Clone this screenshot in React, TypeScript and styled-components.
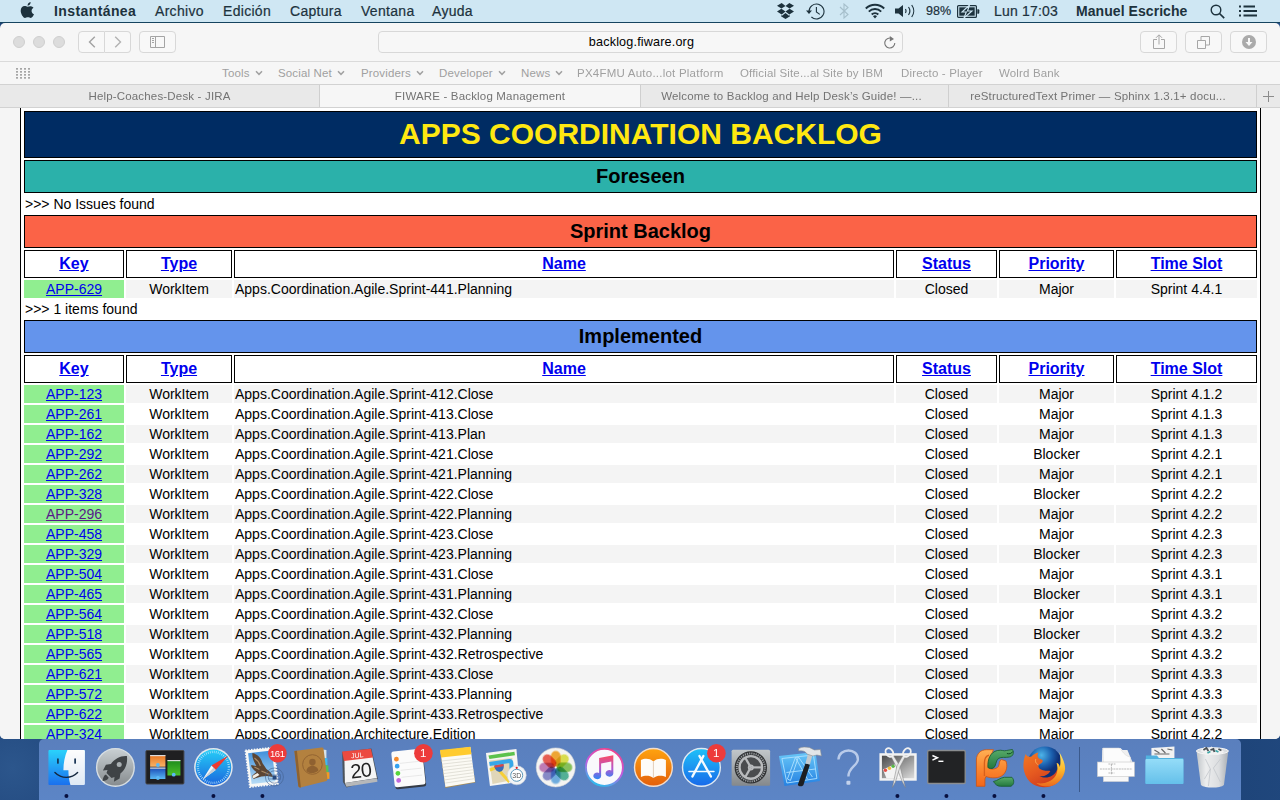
import React from 'react';
import styled, { createGlobalStyle, css } from 'styled-components';

const Global = createGlobalStyle`
  * { box-sizing: border-box; }
  body { margin: 0; overflow: hidden; font-family: 'Liberation Sans', Arial, Helvetica, sans-serif; }
  svg { display: block; flex: none; }
`;

const Desktop = styled.div`
  width: 1280px;
  height: 800px;
  display: flex;
  flex-direction: column;
  overflow: hidden;
  background: radial-gradient(circle at 1% 96%, #2c568c 0, #234a80 4%, #1d4175 20%, #1d4377 80%, #26508a 100%);
`;

/* ---------- menu bar ---------- */

const MenuBar = styled.header`
  height: 23px;
  flex: none;
  display: flex;
  justify-content: space-between;
  background: #cfe7f3;
  border-bottom: 1px solid #16445f;
  color: #1d323d;
`;

const MenuGroup = styled.div`
  display: flex;
  align-items: center;
  height: 22px;
`;

const MenuItem = styled.span<{ $w: number; $bold?: boolean; $ls?: number; $size?: number }>`
  width: ${p => p.$w}px;
  flex: none;
  white-space: nowrap;
  font-size: ${p => p.$size ?? 14}px;
  line-height: 22px;
  letter-spacing: ${p => p.$ls ?? 0.3}px;
  font-weight: ${p => (p.$bold ? 700 : 400)};
  -webkit-text-stroke: ${p => (p.$bold ? 0 : 0.2)}px currentColor;
`;

const IconSlot = styled.span<{ $w: number }>`
  width: ${p => p.$w}px;
  flex: none;
`;

/* ---------- browser window ---------- */

const Window = styled.main`
  height: 716px;
  flex: none;
  display: flex;
  flex-direction: column;
  overflow: hidden;
  border-radius: 5px;
  background: #f6f6f6;
`;

const Toolbar = styled.div`
  height: 39px;
  flex: none;
  display: flex;
  align-items: center;
  padding: 0 13px;
  border-bottom: 1px solid #dadada;
`;

const Lights = styled.div`
  display: flex;
  gap: 8px;
  width: 65px;
`;

const Light = styled.i`
  width: 12px;
  height: 12px;
  border-radius: 50%;
  background: #dcdcdc;
  border: 1px solid #cfcfcf;
`;

const ToolButton = styled.button<{ $w?: number; $side?: 'left' | 'right' }>`
  width: ${p => p.$w ?? 37}px;
  height: 22px;
  padding: 0;
  display: flex;
  align-items: center;
  justify-content: center;
  background: #f8f8f8;
  border: 1px solid #d8d8d8;
  border-radius: 4px;
  ${p => p.$side === 'left' && css`border-radius: 4px 0 0 4px;`}
  ${p => p.$side === 'right' && css`border-radius: 0 4px 4px 0; border-left: 0;`}
`;

const ButtonPair = styled.div`
  display: flex;
  width: 61px;
`;

const AddressBar = styled.div`
  width: 525px;
  height: 22px;
  margin-left: 202px;
  padding: 0 6px 0 20px;
  display: flex;
  align-items: center;
  border: 1px solid #d8d8d8;
  border-radius: 4px;
  background: #f7f7f7;
  font-size: 12.6px;
  letter-spacing: 0.17px;
  color: #000;
`;

const Address = styled.span`
  flex: 1;
  text-align: center;
`;

const ToolActions = styled.div`
  display: flex;
  gap: 8px;
  margin-left: auto;
`;

const Bookmarks = styled.nav`
  height: 23px;
  flex: none;
  display: flex;
  align-items: center;
  padding-left: 16px;
  border-bottom: 1px solid #d2d2d2;
`;

const Bookmark = styled.span<{ $w: number; $ls?: number }>`
  width: ${p => p.$w}px;
  flex: none;
  display: flex;
  align-items: center;
  gap: 5px;
  white-space: nowrap;
  font-size: 11.5px;
  letter-spacing: ${p => p.$ls ?? 0.15}px;
  color: #a0a0a0;
`;

const Tabs = styled.div`
  height: 23px;
  flex: none;
  display: grid;
  grid-template-columns: 320px 321px 308px 308px 23px;
  border-bottom: 1px solid #d2d2d2;
`;

const Tab = styled.div<{ $active?: boolean; $shift?: number }>`
  display: flex;
  align-items: center;
  justify-content: center;
  padding-right: ${p => p.$shift ?? 0}px;
  border-right: 1px solid #cfcfcf;
  background: ${p => (p.$active ? '#f6f6f6' : '#e9e9e9')};
  color: #737373;
  font-size: 11.5px;
  letter-spacing: 0.17px;
  white-space: nowrap;
  &:last-child { border-right: 0; }
`;

/* ---------- backlog page ---------- */

const Page = styled.div`
  flex: 1;
  min-height: 0;
  overflow: hidden;
  padding: 0 19px 0 20px;
  background: #f5f5f5;
`;

const Sheet = styled.div`
  display: flex;
  flex-direction: column;
  gap: 2px;
  min-height: 100%;
  padding: 3px 3px 0;
  background: #fff;
  border: solid #000;
  border-width: 0 1px;
`;

const Banner = styled.h1`
  margin: 0;
  height: 47px;
  border: 1px solid #000;
  background: #002c63;
  color: #ffe811;
  font-size: 30px;
  line-height: 44px;
  text-align: center;
`;

const SectionTitle = styled.h2<{ $bg: string }>`
  margin: 0;
  height: 33px;
  border: 1px solid #000;
  background: ${p => p.$bg};
  font-size: 20px;
  line-height: 31px;
  text-align: center;
`;

const Note = styled.p`
  margin: 0;
  padding-left: 1px;
  height: 18px;
  line-height: 18px;
  font-size: 14px;
`;

const columns = css`
  display: grid;
  grid-template-columns: 100px 106px 660px 101px 115px 141px;
  column-gap: 2px;
`;

const HeadRow = styled.div`
  ${columns}
  height: 28px;
`;

const HeadCell = styled.a`
  border: 1px solid #000;
  color: #00e;
  font-size: 16px;
  font-weight: 700;
  line-height: 26px;
  text-align: center;
  text-decoration: underline;
`;

const Row = styled.div<{ $shade: boolean }>`
  ${columns}
  height: 18px;
  font-size: 14px;
  line-height: 18px;
  & > span { background: ${p => (p.$shade ? '#f4f4f4' : '#fff')}; }
`;

const Cell = styled.span<{ $left?: boolean }>`
  padding-left: ${p => (p.$left ? 1 : 0)}px;
  text-align: ${p => (p.$left ? 'left' : 'center')};
`;

const KeyCell = styled.a<{ $visited?: boolean }>`
  background: #90ee90;
  color: ${p => (p.$visited ? '#551a8b' : '#00e')};
  text-align: center;
  text-decoration: underline;
`;

/* ---------- dock ---------- */

const DockArea = styled.footer`
  height: 61px;
  flex: none;
  display: flex;
  padding-left: 39px;
`;

const Dock = styled.div`
  width: 1202px;
  height: 61px;
  display: flex;
  padding-left: 3.4px;
  border-radius: 5px 5px 0 0;
  background: linear-gradient(#5a7fbd, #5c85c6);
`;

const DockSlot = styled.svg`
  width: 48.85px;
  height: 61px;
`;

const Separator = styled.i`
  width: 1px;
  height: 45px;
  margin: 8px 10.6px 0 11px;
  background: #3b5a8c;
`;

const titles = ['Key', 'Type', 'Name', 'Status', 'Priority', 'Time Slot'];

type Issue = [key: string, name: string, priority: string, slot: string];

const implemented: Issue[] = [
  ['APP-123', 'Agile.Sprint-412.Close', 'Major', '4.1.2'],
  ['APP-261', 'Agile.Sprint-413.Close', 'Major', '4.1.3'],
  ['APP-162', 'Agile.Sprint-413.Plan', 'Major', '4.1.3'],
  ['APP-292', 'Agile.Sprint-421.Close', 'Blocker', '4.2.1'],
  ['APP-262', 'Agile.Sprint-421.Planning', 'Major', '4.2.1'],
  ['APP-328', 'Agile.Sprint-422.Close', 'Blocker', '4.2.2'],
  ['APP-296', 'Agile.Sprint-422.Planning', 'Major', '4.2.2'],
  ['APP-458', 'Agile.Sprint-423.Close', 'Major', '4.2.3'],
  ['APP-329', 'Agile.Sprint-423.Planning', 'Blocker', '4.2.3'],
  ['APP-504', 'Agile.Sprint-431.Close', 'Major', '4.3.1'],
  ['APP-465', 'Agile.Sprint-431.Planning', 'Blocker', '4.3.1'],
  ['APP-564', 'Agile.Sprint-432.Close', 'Major', '4.3.2'],
  ['APP-518', 'Agile.Sprint-432.Planning', 'Blocker', '4.3.2'],
  ['APP-565', 'Agile.Sprint-432.Retrospective', 'Major', '4.3.2'],
  ['APP-621', 'Agile.Sprint-433.Close', 'Major', '4.3.3'],
  ['APP-572', 'Agile.Sprint-433.Planning', 'Major', '4.3.3'],
  ['APP-622', 'Agile.Sprint-433.Retrospective', 'Major', '4.3.3'],
  ['APP-324', 'Architecture.Edition', 'Major', '4.2.2'],
];

const sprint: Issue[] = [['APP-629', 'Agile.Sprint-441.Planning', 'Major', '4.4.1']];

function IssueTable({ issues }: { issues: Issue[] }) {
  return (
    <>
      <HeadRow>{titles.map(t => <HeadCell key={t}>{t}</HeadCell>)}</HeadRow>
      {issues.map(([key, name, priority, slot], i) => (
        <Row key={key} $shade={i % 2 === 0}>
          <KeyCell $visited={key === 'APP-296'}>{key}</KeyCell>
          <Cell>WorkItem</Cell>
          <Cell $left>Apps.Coordination.{name}</Cell>
          <Cell>Closed</Cell>
          <Cell>{priority}</Cell>
          <Cell>Sprint {slot}</Cell>
        </Row>
      ))}
    </>
  );
}

const Chevron = () => (
  <svg width="8" height="6" viewBox="0 0 8 6"><path d="M1 1.2 4 4.3 7 1.2" fill="none" stroke="#a2a2a2" strokeWidth="1.5" /></svg>
);

/* Dock icons share a coordinate system whose origin is the centre of the icon. */
function DockIcon({ children, running }: { children: React.ReactNode; running?: boolean }) {
  return (
    <DockSlot viewBox="-24.42 -29 48.85 61">
      {children}
      {running && <circle cx="0" cy="28" r="2" fill="#08103f" />}
    </DockSlot>
  );
}

const Badge = ({ text, x = 15 }: { text: string; x?: number }) => (
  <g>
    <circle cx={x} cy="-14.8" r="9.3" fill="#ed3b3b" />
    <text x={x - 0.2} y="-10.8" fontSize={text.length > 1 ? 9.5 : 11.5} textAnchor="middle" fill="#fff" letterSpacing={text.length > 1 ? -0.4 : 0}>{text}</text>
  </g>
);

const petals = ['#f8a21c', '#dfe33a', '#7cc24a', '#3fae8f', '#5fa9e6', '#7c7fcb', '#c06fb5', '#ee4b3c'];

function DockIcons() {
  return (
    <>
      <DockIcon running>
        <defs>
          <linearGradient id="fl" x2="0" y2="1"><stop offset="0" stopColor="#2ad2fb" /><stop offset="1" stopColor="#1a70ee" /></linearGradient>
          <linearGradient id="fr" x2="0" y2="1"><stop offset="0" stopColor="#fdfdfd" /><stop offset="1" stopColor="#dfe9f4" /></linearGradient>
        </defs>
        <rect x="-18" y="-18" width="36.5" height="35" rx="1" fill="url(#fl)" />
        <path d="M1-18H17.5a1 1 0 0 1 1 1V16a1 1 0 0 1-1 1H4C2.600 12 2 7 2 2.200H-3C-3-5-1.700-12 1-18Z" fill="url(#fr)" />
        <path d="M-8.500-8.800v3.700M8.700-8.800v3.700" stroke="#153253" strokeWidth="1.700" strokeLinecap="round" />
        <path d="M-11.500 4.500C-5 11 5 11 11.200 4.500" fill="none" stroke="#14273e" strokeWidth="1.400" strokeLinecap="round" />
      </DockIcon>
      <DockIcon>
        <linearGradient id="lp" x2="0" y2="1"><stop offset="0" stopColor="#c9d0d3" /><stop offset="1" stopColor="#868b8e" /></linearGradient>
        <circle r="18.800" cy="-.6" fill="url(#lp)" stroke="#d7dee2" strokeWidth="1.400" />
        <path d="M11.500-12C5-12.500-1-9-4.500-4l-5 .8-3 5.700 4.600-.4-1 3 5 5 3-1-.6 4.600L4.200 10.500 5 5.500C10 2 12.500-5 11.500-12ZM-9.500 6.500C-12 7.500-12.500 10.500-12.800 13c2.500-.3 5-.8 6.100-3.300Z" fill="#3f4346" />
        <circle cx="3.800" cy="-3.500" r="2.500" fill="#aab0b3" />
      </DockIcon>
      <DockIcon>
        <defs>
          <linearGradient id="mo" x2="0" y2="1"><stop offset="0" stopColor="#e8741e" /><stop offset="1" stopColor="#f8b368" /></linearGradient>
          <linearGradient id="mb" x2="0" y2="1"><stop offset="0" stopColor="#1848b4" /><stop offset="1" stopColor="#59b8f4" /></linearGradient>
          <linearGradient id="mg" x2="0" y2="1"><stop offset="0" stopColor="#1c8a1c" /><stop offset="1" stopColor="#4cc02a" /></linearGradient>
        </defs>
        <rect x="-18.500" y="-17.500" width="38" height="33.500" rx="1" fill="#1f1f21" stroke="#454547" />
        <rect x="-14.300" y="-13" width="15.300" height="11.700" fill="url(#mo)" /><rect x="-14.300" y="-13" width="15.300" height="1.200" fill="#ddd" />
        <rect x="-14.300" y="-.5" width="15.300" height="11.500" fill="url(#mb)" /><rect x="-14.300" y="-.5" width="15.300" height="1.200" fill="#ddd" />
        <rect x="3" y="-8" width="13" height="15.500" fill="url(#mg)" /><rect x="3" y="-8" width="13" height="1.200" fill="#ddd" />
        <g fill="#5bb9f6"><circle cx="-6.500" cy="-3" r="1.900" /><circle cx="-6.500" cy="10" r="1.900" /><circle cx="9.300" cy="6.700" r="1.900" /></g>
      </DockIcon>
      <DockIcon running>
        <linearGradient id="sa" x2="0" y2="1"><stop offset="0" stopColor="#25cdf7" /><stop offset="1" stopColor="#1a66dd" /></linearGradient>
        <circle r="19.300" cy="-.6" fill="#e3e8ec" /><circle r="17.800" cy="-.6" fill="url(#sa)" />
        <circle r="15.500" cy="-.6" fill="none" stroke="#b5e4fb" strokeWidth="2.400" strokeDasharray=".7 1.329" />
        <path d="M15-12.500 2.300 2-2-2.500Z" fill="#ef3a30" /><path d="M-10.700 11.500-2-2.500 2.300 2Z" fill="#f4f6f8" /><path d="M-10.700 11.500 2.300 2 0-.2Z" fill="#c9ced4" />
      </DockIcon>
      <DockIcon running>
        <linearGradient id="ma" x2="0" y2="1"><stop offset="0" stopColor="#3f8fdb" /><stop offset="1" stopColor="#b8dcf5" /></linearGradient>
        <path d="M-17-17.500 11.500-20.500 15.500 16-12.500 19Z" fill="#f8f8f6" stroke="#f8f8f6" strokeWidth="1.800" strokeDasharray="1.500 1.300" />
        <path d="M-14.300-14.800 9.500-17.500 13 13.300-10.800 16Z" fill="url(#ma)" />
        <path d="M-10-15C-5-14-1-10 0-5L4 1C8 4 10 6 10.500 9L5 8-1 8.500-9 11-10.500 8-6 4C-10 1-12-2-11-3L-6-2C-9-7-10.500-11-10-15Z" fill="#5c4533" />
        <path d="M-8-10C-5-8-3-5-2-2M-1 3 7 6.500M-8-1 -3 1.500" stroke="#a98a66" strokeWidth="1.200" fill="none" />
        <path d="m-10 8 5-3 2 2-6 3.500Z" fill="#f3eee4" />
        <g fill="none" stroke="#41608e" strokeWidth=".8" opacity=".75"><circle cx="12" cy="9" r="9" /><circle cx="12" cy="9" r="6.200" /><path d="M6 7h12M6 11h12" /></g><rect x="10.200" y="7.500" width="4" height="4" fill="#27497e" />
        <Badge text="161" />
      </DockIcon>
      <DockIcon>
        <path d="m11-18.500 4 .5v8.500l-4 0Z" fill="#d8e3e8" /><path d="m12-10 4 .3v7L12-3Z" fill="#41b8ef" /><path d="m12-3 5 .5V4.500L12 4.500Z" fill="#53c453" /><path d="m13 4 5 .2v6.500L13 11.500Z" fill="#f29a22" />
        <path d="M-17-17 10-20.500C11.500-20.600 12-20 12.200-18.500L16 11c0 1.300-.5 2-2 2.300L-11 19.600c-1.500 0-2-.5-2.200-2Z" fill="#b3813f" />
        <path d="M-17-17-14.500-17.300-10.500 19.400c-1.500 0-2.600-.6-2.700-2Z" fill="#8e6231" />
        <circle cx="1" cy="-3.500" r="9.800" fill="none" stroke="#936331" strokeWidth="1" /><circle cx="1" cy="-6" r="3.200" fill="#8f6130" /><path d="M-5 3C-4.500-1-2-1 0-2.500h2c2 1.500 4.500 1.500 5 5C3 6-2 6-5 3Z" fill="#8f6130" />
      </DockIcon>
      <DockIcon>
        <path d="M-17.300-16 12-19.500 18.500 11-13 19.500-16.500 14Z" fill="#4b535c" />
        <path d="M-15-8.500 13-11.500 17.500 10-14.500 15Z" fill="#f5f5f5" /><path d="m-14.500 15 32-4.800.5 3.500-31 5Z" fill="#b6b8ba" />
        <path d="M-17.300-16.500 11.500-19.300 13.500-10.500-15.500-7Z" fill="#ec4a40" />
        <g transform="rotate(-6)"><text x="-1" y="-10.500" fontSize="7" fill="#fff" textAnchor="middle">JUL</text><text x="1" y="9.500" fontSize="20" letterSpacing="-1" textAnchor="middle" fill="#222">20</text></g>
      </DockIcon>
      <DockIcon>
        <g transform="rotate(-6)">
          <rect x="-15" y="-16" width="31" height="36" rx="2.500" fill="#343b46" /><rect x="-15.500" y="-18" width="31" height="36" rx="2.500" fill="#fbfbfb" />
          <g stroke="#dedede" strokeWidth=".6"><path d="M-8-5.500h21M-8 1.500h21M-8 8.500h21" /></g>
          <circle cx="-11" cy="-10" r="2.400" fill="#f68b2c" /><circle cx="-11" cy="-3" r="2.400" fill="#35a2f0" /><circle cx="-11" cy="4.200" r="2.400" fill="#57d73c" /><circle cx="-11" cy="11.300" r="2.400" fill="#be69dc" />
        </g>
        <Badge text="1" />
      </DockIcon>
      <DockIcon>
        <path d="M-17-15 12-20 18 14.500-12 20Z" fill="#a88c54" />
        <path d="M-17-17 13-21 17.600 14-12 19Z" fill="#fbfaf4" />
        <path d="M-17.400-18 13-21.300 14-13.800-16.300-10.500Z" fill="#ffcb2e" />
        <g stroke="#d7d5cc" strokeWidth=".7">{[0, 1, 2, 3, 4, 5, 6, 7].map(i => <path key={i} d={`M${-16 + i * 0.55} ${-7 + i * 3.15} ${14.3 + i * 0.4} ${-10.300 + i * 3}`} />)}</g>
      </DockIcon>
      <DockIcon>
        <path d="M-20.500-15 10-19 13 14-16.500 18Z" fill="#f6f5f1" />
        <path d="m-18-12.500 26-3.800.5 3.500L-17-9Z" fill="#5cc24c" /><path d="m-17-7.500 23-2.500v22l-20 4Z" fill="#e0d6b8" />
        <path d="M-17-4 3-7C5-7 5-6 5-4V5" fill="none" stroke="#37a7e8" strokeWidth="4" /><path d="m-16.500 2 6.500-2.500L3 14" fill="none" stroke="#f6cf37" strokeWidth="3" />
        <path d="M-12-2.500 -3-4C-2 0-3 3-7 4-11 3-12 0-12-2.500Z" fill="#376db8" /><path d="m-12-2.500 9-1.500.2 2.200-9 1.500Z" fill="#d84848" />
        <circle cx="10.300" cy="7.300" r="9.500" fill="#f2f4f6" stroke="#cbd1d8" strokeWidth=".6" /><circle cx="10.300" cy="7.300" r="6" fill="#fff" stroke="#5a98bb" /><circle cx="10.300" cy="-.2" r="1.100" fill="#e02020" />
        <text x="10.300" y="10" fontSize="7" textAnchor="middle" fill="#555">3D</text>
      </DockIcon>
      <DockIcon>
        <circle r="19.500" cx=".3" cy="-.6" fill="#f4f4f2" stroke="#d2d4d6" strokeWidth=".6" />
        <g transform="translate(.3 -.6)">{petals.map((c, i) => <rect key={c} x="-4.800" y="-16.500" width="9.600" height="15.500" rx="4.800" fill={c} opacity=".88" style={{ mixBlendMode: 'multiply' }} transform={`rotate(${i * 45})`} />)}</g>
      </DockIcon>
      <DockIcon>
        <linearGradient id="it" x1=".7" x2=".3" y2="1"><stop offset="0" stopColor="#f1428a" /><stop offset=".5" stopColor="#c25be0" /><stop offset="1" stopColor="#28bfee" /></linearGradient>
        <linearGradient id="in" x2="0" y2="1"><stop offset="0" stopColor="#fb4c61" /><stop offset=".55" stopColor="#b557ce" /><stop offset="1" stopColor="#2d86f5" /></linearGradient>
        <circle r="18.500" cy="-.6" fill="#f9f9fc" stroke="url(#it)" strokeWidth="1.900" />
        <path d="M-5.300-10 8.900-12.800V5.500a3.900 3.300 0 1 1-2-3V-6.500L-3.300-4.500V8A3.900 3.300 0 1 1-5.300 5Z" fill="url(#in)" />
      </DockIcon>
      <DockIcon>
        <linearGradient id="ib" x2="0" y2="1"><stop offset="0" stopColor="#ffa30f" /><stop offset="1" stopColor="#e35f0c" /></linearGradient>
        <circle r="18.900" cy="-.6" fill="url(#ib)" stroke="#f2ddcc" strokeWidth="1.400" />
        <path d="M0-6.500C-4-10-9-9.500-12.500-8V9C-9 7.500-4 7 0 10 4 7 9 7.500 12.500 9V-8C9-9.500 4-10 0-6.500Z" fill="#fdfbf8" /><path d="M0-6.500V10" stroke="#e0c8b2" strokeWidth=".9" />
      </DockIcon>
      <DockIcon>
        <linearGradient id="as" x2="0" y2="1"><stop offset="0" stopColor="#1fc1f8" /><stop offset="1" stopColor="#1869ea" /></linearGradient>
        <circle r="18.900" cy="-.6" fill="url(#as)" stroke="#dfe9f2" strokeWidth="1.400" />
        <g stroke="#f6fbff" strokeWidth="2.400" strokeLinecap="round"><path d="M2-12-9 8.500M-2-12 9.500 8.500" /><path d="M-12.500 3.500h25" strokeWidth="1.500" /></g>
        <Badge text="1" />
      </DockIcon>
      <DockIcon>
        <linearGradient id="sp" x2="0" y2="1"><stop offset="0" stopColor="#c2c7ca" /><stop offset="1" stopColor="#85898c" /></linearGradient>
        <rect x="-18.800" y="-18.300" width="38.500" height="36" rx="1.500" fill="url(#sp)" />
        <g transform="translate(.4 -.6)"><circle r="16.200" fill="#303234" /><circle r="14" fill="none" stroke="#999da0" strokeWidth="2" strokeDasharray="1.200 1" />
          <circle r="11.300" fill="#4a4c4e" stroke="#b9bbbd" strokeWidth="2.400" /><circle r="3" fill="#b9bbbd" /><circle r="1.300" fill="#444" />
          {[0, 120, 240].map(a => <path key={a} d="M0 0H11" stroke="#b9bbbd" strokeWidth="2.200" transform={`rotate(${a})`} />)}</g>
      </DockIcon>
      <DockIcon>
        <linearGradient id="xc" x2="0" y2="1"><stop offset="0" stopColor="#69c8f8" /><stop offset="1" stopColor="#2581e2" /></linearGradient>
        <path d="M-20.500-12 16-16 20.500 13-15 18Z" fill="url(#xc)" />
        <g fill="none" stroke="#aee1ff" strokeWidth=".9"><path d="M-17.500-9.500 14-13 17.500 10.500-12.500 15ZM-12 11-4-10.500-1-11-9 12.500ZM-4-10.500 8 11M-1-11 13 9M-13 4.500 16 1" /></g>
        <path d="M6-4.500 10.500-3.500 4 17C3 19-2 18.500-1.500 16.500Z" fill="#1c1e21" /><path d="M8.500-14 6-4.500 10.500-3.500 13-13Z" fill="#c4c9cd" />
        <path d="M-.8-19.500C3-21.500 7-21 10-20.500L15-18 21-18.500 22-12 17.500-13 13.500-12 7.500-14C6-17 3-17.500-.8-17Z" fill="#e2e5e8" stroke="#848a91" strokeWidth=".6" />
      </DockIcon>
      <DockIcon>
        <path d="M-10-8.500C-9.500-20.500 9.800-20.500 9.500-8.500 9-2 0-1 0 8.500" fill="none" stroke="#b9cbea" strokeWidth="2.400" /><rect x="-2" y="12.800" width="4" height="4" rx="1" fill="#c3d2ec" />
      </DockIcon>
      <DockIcon running>
        <linearGradient id="gr" x2="1" y2="1"><stop offset="0" stopColor="#4a4a4a" /><stop offset="1" stopColor="#dcdcdc" /></linearGradient>
        <rect x="-18" y="-14.800" width="37.300" height="27.500" fill="#f3f3f3" /><rect x="-15.500" y="-12.300" width="32.300" height="22.500" fill="url(#gr)" />
        <path d="M-14.500 1.500-.5-4.500 5 10.200h-16Z" fill="#f4f4f4" /><circle cx="-12" cy="2.200" r="1.700" fill="#e34d45" /><circle cx="-8" cy=".2" r="1.700" fill="#efbd3a" /><circle cx="-4.300" cy="-1.800" r="1.700" fill="#58b847" />
        <g fill="#e9e9e9" stroke="#7b7b7b" strokeWidth=".5"><path d="M-6.500-11.500-4-12.500 2.500-2 8 19.500 5 14-1-1Z" /><path d="M8-11.500 5.500-12.500-.5-2-5 19.500-2 14 2.500-1Z" /></g>
        <g fill="none" stroke="#f0f0f0" strokeWidth="1.900"><ellipse cx="-8" cy="-15.500" rx="3.400" ry="4.600" transform="rotate(-35 -8 -15.500)" /><ellipse cx="9.500" cy="-15.500" rx="3.400" ry="4.600" transform="rotate(35 9.500 -15.500)" /></g>
      </DockIcon>
      <DockIcon running>
        <rect x="-18.700" y="-17.500" width="37.500" height="33" rx="1.200" fill="#222325" stroke="#8a8d90" strokeWidth="1.300" />
        <path d="m-14-12.500 5 2.300-5 2.300" fill="none" stroke="#fff" strokeWidth="1.500" /><path d="M-8-6.700h5" stroke="#fff" strokeWidth="1.400" />
      </DockIcon>
      <DockIcon running>
        <defs>
          <linearGradient id="py" x2="0" y2="1"><stop offset="0" stopColor="#ffb054" /><stop offset=".5" stopColor="#fb8830" /><stop offset="1" stopColor="#f2661a" /></linearGradient>
          <linearGradient id="pg" x2="0" y2="1"><stop offset="0" stopColor="#58ab6a" /><stop offset="1" stopColor="#23783e" /></linearGradient>
        </defs>
        <path d="M-18 18.300V-8C-18-14.500-13.500-18.300-8-18.300H-1L-5-8-6-.5C-5 2 2 1.500 4-1.500 5.500-4 4-7 7-8.500L11.500-7C13.500-2 12 4 8.500 7 4.500 10.500-3 10.500-8.500 8.500L-9.500 11V18.300Z" fill="url(#py)" stroke="#cf5410" strokeWidth=".8" strokeLinejoin="round" />
        <path d="M-10 8V-5C-10-9-9-12-5.500-13" fill="none" stroke="#d7601a" strokeWidth="1.300" />
        <path d="M-6.500-.5C-7-9-4-16 3-17.500 8-18.500 9-16.500 12-17.500L18-18.500C20-15 18.500-11.500 15-11 11-10 7-11.500 4-9.500 1-7 2-2-1 0-3 1-5 .5-6.500-.5Z" fill="url(#pg)" stroke="#17592d" strokeWidth=".8" />
        <path d="M-1 13.500C4 12.500 5 10 10 9.300L17.500 9.300C20.500 12.500 19.500 17 16.500 18.300H6C3 18.300 1 16.500-1 13.500Z" fill="url(#pg)" stroke="#17592d" strokeWidth=".8" />
        <path d="M12.500-14.500c2.500.8 4.500 0 6-2" stroke="#0d4a22" fill="none" />
      </DockIcon>
      <DockIcon running>
        <defs>
          <linearGradient id="ff" x2=".7" y2="1"><stop offset="0" stopColor="#f27a24" /><stop offset=".5" stopColor="#e65a20" /><stop offset="1" stopColor="#c9351b" /></linearGradient>
          <radialGradient id="fg" cx=".4" cy=".25"><stop offset="0" stopColor="#4db4e8" /><stop offset=".6" stopColor="#1b5fae" /><stop offset="1" stopColor="#0e2f76" /></radialGradient>
          <linearGradient id="fy" x2="0" y2="1"><stop offset="0" stopColor="#ffe96a" /><stop offset=".5" stopColor="#fdb92c" /><stop offset="1" stopColor="#ea6a1d" /></linearGradient>
        </defs>
        <circle cx="1.500" cy="-4" r="17.500" fill="url(#fg)" />
        <path d="M-17.700-14C-16.500-11-14-11-12-11.500-10-13.500-7.500-15-5-15.500-6.500-13-6-11-4.500-9.500L-1-8C0-6-2-4.500-5-3-5.500 0-3 2 1 2.500 3 3.500 5 2 7 3 5 7 0 9-4 8 2 11.500 11 9 13.500 2L15 1 21 2C20 12 11 19.500 0 19.300-10 19-19 12-20-1-20-6-19.500-10-17.700-14Z" fill="url(#ff)" />
        <path d="M16-16C17-13 21.800-7 21.700 1 21 10 14 17 6 18.500 0 19-5 17-7 15 0 16.500 8 14 12 8 15 3 14-1 13.200-5 15-5 16-3 16.500-1 17.500-6 17-11 16-16Z" fill="url(#fy)" />
        <path d="M-5-3C-8-5-8.500-7-7.500-9" fill="none" stroke="#ffb45c" strokeWidth=".8" />
      </DockIcon>
      <Separator />
      <DockIcon>
        <path d="M-13-20H5l8 8V0h-26Z" fill="#f7f7f7" /><path d="M-13-18H12l5 12V4h-31Z" fill="#efefef" /><path d="M-12.500-20H4C7-17 9-12 15-11L15 1h-27Z" fill="#fcfcfc" stroke="#d2d2d2" strokeWidth=".5" />
        <rect x="-12" y="6" width="25" height="7.500" fill="#f8f8f8" stroke="#d5d5d5" strokeWidth=".6" /><rect x="-18" y="-6" width="37" height="14.500" fill="#fdfdfd" stroke="#c8c8c8" strokeWidth=".6" />
        <path d="M-15.500 1H17M-4-4v11M-7-4h7M-7 5h6" stroke="#aaa" strokeWidth=".8" strokeDasharray="2 .7" />
      </DockIcon>
      <DockIcon>
        <linearGradient id="fo" x2="0" y2="1"><stop offset="0" stopColor="#94dcf8" /><stop offset="1" stopColor="#65c0ea" /></linearGradient>
        <path d="M-13-20 10-21.500V-8h-23Z" fill="#f2f2f2" /><path d="m-10-18 5 3m2-4 4 4m2-4 5 1M-10-14h15" stroke="#666" strokeWidth="1.100" />
        <path d="M-18.500-12.500h11l2 2.500H18a1 1 0 0 1 1 1V15a1 1 0 0 1-1 1h-36a1 1 0 0 1-1-1Z" fill="#51b2df" /><rect x="-19" y="-9" width="38" height="25" rx="1" fill="url(#fo)" />
      </DockIcon>
      <DockIcon>
        <linearGradient id="tr"><stop offset="0" stopColor="#bfc4c8" /><stop offset=".3" stopColor="#ecedee" /><stop offset=".7" stopColor="#dcdee0" /><stop offset="1" stopColor="#a9aeb4" /></linearGradient>
        <path d="M-16-17.500H16L11.500 17C8 20.500-8 20.500-11.500 17Z" fill="url(#tr)" /><ellipse cy="-17" rx="16" ry="3.300" fill="#dadde0" stroke="#f5f5f5" />
        <path d="m-12-17 4-4 4 2 3-2.500 4 3 4-1.500 5 4-7 3-5-1-6 1Z" fill="#f2f2f2" /><path d="m-9-18 3-2 2 3m2-1 3-1 1 3m4-3 3 1.500" stroke="#4a5055" strokeWidth="1.800" fill="none" /><path d="m-5-15 3-1.500m5-1 3 1.500" stroke="#3aa5a5" strokeWidth="1.600" />
        <path d="m-7-9 5 10-6 10M8-9 1 0l7 14M-2 1l-2 17" stroke="#c3c7cb" strokeWidth=".8" fill="none" />
      </DockIcon>
    </>
  );
}

export default function App() {
  return (
    <Desktop>
      <Global />
      <MenuBar>
        <MenuGroup>
          <IconSlot $w={54}>
            <svg width="54" height="22" viewBox="0 0 54 22"><path d="M27.600 6.700c1-.1 2.300-.9 4-.3.900.3 1.500.8 1.900 1.400-2.800 1.700-2.400 5.200.5 6.500-.7 1.800-2 3.600-3.200 3.600-1 0-1.500-.7-2.900-.7s-1.900.7-2.900.7c-2 0-4.300-4.200-4.300-7.100 0-3 1.800-4.700 3.900-4.700 1.300 0 2.100.6 3 .6ZM27.600 5.700c-.2-1.700 1.200-3.500 3-3.700.3 1.800-1.200 3.600-3 3.700Z" fill="#1d323d" /></svg>
          </IconSlot>
          <MenuItem $w={101} $bold $ls={0.4}>Instantánea</MenuItem>
          <MenuItem $w={68}>Archivo</MenuItem>
          <MenuItem $w={67}>Edición</MenuItem>
          <MenuItem $w={71}>Captura</MenuItem>
          <MenuItem $w={71}>Ventana</MenuItem>
          <MenuItem $w={60}>Ayuda</MenuItem>
        </MenuGroup>
        <MenuGroup>
          <IconSlot $w={29}>
            <svg width="17" height="16" viewBox="0 0 17 16"><path d="M4.700 0 8.500 3 4.400 5.600 0 2.800ZM12.300 0 8.500 3l4.100 2.600L17 2.800ZM0 8.500 4.400 5.700 8.500 8.400 4.700 11.500ZM17 8.500 12.600 5.700 8.500 8.400l3.800 3.100ZM4 12.200l1 .6L8.500 10l3.500 2.800 1-.6v1L8.500 16 4 13.200Z" fill="#1d323d" /></svg>
          </IconSlot>
          <IconSlot $w={33}>
            <svg width="19" height="17" viewBox="0 0 19 17"><g fill="none" stroke="#1d323d" strokeWidth="1.100"><path d="M3 8.500A7.500 7.500 0 1 1 5.400 14" /><path d="M10.400 4v5l3.400 2.400" /></g><path d="M0 7.500h6L3 11Z" fill="#1d323d" /></svg>
          </IconSlot>
          <IconSlot $w={26}>
            <svg width="11" height="16" viewBox="0 0 11 16"><path d="m1 4 8 7.500L5 15V1l4 3.500L1 12" fill="none" stroke="#a6bfcb" strokeWidth="1.100" /></svg>
          </IconSlot>
          <IconSlot $w={30}>
            <svg width="20" height="16" viewBox="0 0 20 16"><g fill="none" stroke="#1d323d" strokeWidth="1.900"><path d="M.8 5.500a13 13 0 0 1 18.400 0M3.800 8.600a8.800 8.800 0 0 1 12.400 0M6.700 11.500a4.700 4.700 0 0 1 6.600 0" /></g><path d="M10 15.500 8 13.300a2.800 2.800 0 0 1 4 0Z" fill="#1d323d" /></svg>
          </IconSlot>
          <IconSlot $w={31}>
            <svg width="22" height="14" viewBox="0 0 22 14"><path d="M0 4.500h3.500L8 1v12L3.500 9.500H0Z" fill="#1d323d" /><g fill="none" stroke="#1d323d" strokeWidth="1.200"><path d="M10.500 5a4 4 0 0 1 0 4M13.500 3a7 7 0 0 1 0 8M16.700 1a10 10 0 0 1 0 12" /></g></svg>
          </IconSlot>
          <MenuItem $w={31} $size={12.5} $ls={0}>98%</MenuItem>
          <IconSlot $w={37}>
            <svg width="23" height="13" viewBox="0 0 23 13"><rect x=".6" y=".6" width="18.800" height="11.800" rx="1" fill="none" stroke="#1d323d" strokeWidth="1.200" /><rect x="2.300" y="2.300" width="15.400" height="8.400" fill="#1d323d" /><path d="M12.500 0 5 7h4.300L7 13l8-7h-4.500Z" fill="#1d323d" stroke="#cfe7f3" strokeWidth="1.100" /><path d="M20.300 4.300h1a1 1 0 0 1 1 1v2.400a1 1 0 0 1-1 1h-1Z" fill="#1d323d" /></svg>
          </IconSlot>
          <MenuItem $w={82} $ls={0.2}>Lun 17:03</MenuItem>
          <MenuItem $w={134} $bold $ls={0.06}>Manuel Escriche</MenuItem>
          <IconSlot $w={29}>
            <svg width="15" height="15" viewBox="0 0 15 15"><circle cx="6" cy="6" r="4.800" fill="none" stroke="#1d323d" strokeWidth="1.400" /><path d="m9.500 9.500 4.700 4.700" stroke="#1d323d" strokeWidth="1.700" /></svg>
          </IconSlot>
          <IconSlot $w={41}>
            <svg width="18" height="12" viewBox="0 0 18 12"><path d="M0 1.500h2M0 6h2M0 10.500h2M4.500 1.500H16M4.500 6H18M4.500 10.500H18" stroke="#1d323d" strokeWidth="2" /></svg>
          </IconSlot>
        </MenuGroup>
      </MenuBar>

      <Window>
        <Toolbar>
          <Lights><Light /><Light /><Light /></Lights>
          <ButtonPair>
            <ToolButton $w={27} $side="left"><svg width="8" height="12" viewBox="0 0 8 12"><path d="M6.800.8 1.500 6l5.300 5.200" fill="none" stroke="#a2a2a2" strokeWidth="1.400" /></svg></ToolButton>
            <ToolButton $w={26} $side="right"><svg width="8" height="12" viewBox="0 0 8 12"><path d="M1.200.8 6.500 6l-5.300 5.200" fill="none" stroke="#b2b2b2" strokeWidth="1.400" /></svg></ToolButton>
          </ButtonPair>
          <ToolButton><svg width="15" height="12" viewBox="0 0 15 12"><path d="M.5.500h14v11H.5ZM5.500.5v11M2 2.500h2M2 4.500h2M2 6.500h2" fill="none" stroke="#a4a4a4" /></svg></ToolButton>
          <AddressBar>
            <Address>backlog.fiware.org</Address>
            <svg width="12" height="13" viewBox="0 0 12 13"><path d="M10.800 7A5 5 0 1 1 8 2.500" fill="none" stroke="#777" strokeWidth="1.100" /><path d="M5.800 0 10 3 5.800 5.500Z" fill="#777" /></svg>
          </AddressBar>
          <ToolActions>
            <ToolButton><svg width="12" height="16" viewBox="0 0 12 16"><path d="M4 5.500H.5v9h11v-9H8M6 10.500V1M3 3.800 6 .8l3 3" fill="none" stroke="#a6a6a6" /></svg></ToolButton>
            <ToolButton><svg width="13" height="13" viewBox="0 0 13 13"><path d="M.5 4.500h8v8h-8ZM4 4.500v-4h8.500V9h-4" fill="none" stroke="#a6a6a6" /></svg></ToolButton>
            <ToolButton><svg width="14" height="14" viewBox="0 0 14 14"><circle cx="7" cy="7" r="7" fill="#aaa" /><path d="M6 3h2v4h2.500L7 11 3.500 7H6Z" fill="#f8f8f8" /></svg></ToolButton>
          </ToolActions>
        </Toolbar>

        <Bookmarks>
          <IconSlot $w={206}>
            <svg width="15" height="11" viewBox="0 0 15 11">{[0, 4, 8, 12].map(x => [0, 3, 6, 9].map(y => <rect key={`${x}-${y}`} x={x} y={y} width="2" height="1.700" fill="#a6a6a6" />))}</svg>
          </IconSlot>
          <Bookmark $w={56}>Tools<Chevron /></Bookmark>
          <Bookmark $w={83}>Social Net<Chevron /></Bookmark>
          <Bookmark $w={78}>Providers<Chevron /></Bookmark>
          <Bookmark $w={82}>Developer<Chevron /></Bookmark>
          <Bookmark $w={56}>News<Chevron /></Bookmark>
          <Bookmark $w={163} $ls={0.23}>PX4FMU Auto...lot Platform</Bookmark>
          <Bookmark $w={161}>Official Site...al Site by IBM</Bookmark>
          <Bookmark $w={98}>Directo - Player</Bookmark>
          <Bookmark $w={70}>Wolrd Bank</Bookmark>
        </Bookmarks>

        <Tabs>
          <Tab>Help-Coaches-Desk - JIRA</Tab>
          <Tab $active>FIWARE - Backlog Management</Tab>
          <Tab $shift={6}>Welcome to Backlog and Help Desk’s Guide! —...</Tab>
          <Tab $shift={9}>reStructuredText Primer — Sphinx 1.3.1+ docu...</Tab>
          <Tab><svg width="11" height="11" viewBox="0 0 11 11"><path d="M5.500 0v11M0 5.500h11" stroke="#8c8c8c" /></svg></Tab>
        </Tabs>

        <Page>
          <Sheet>
            <Banner>APPS COORDINATION BACKLOG</Banner>
            <SectionTitle $bg="#2bb1aa">Foreseen</SectionTitle>
            <Note>&gt;&gt;&gt; No Issues found</Note>
            <SectionTitle $bg="#fb6347">Sprint Backlog</SectionTitle>
            <IssueTable issues={sprint} />
            <Note>&gt;&gt;&gt; 1 items found</Note>
            <SectionTitle $bg="#6494ec">Implemented</SectionTitle>
            <IssueTable issues={implemented} />
          </Sheet>
        </Page>
      </Window>

      <DockArea>
        <Dock><DockIcons /></Dock>
      </DockArea>
    </Desktop>
  );
}
